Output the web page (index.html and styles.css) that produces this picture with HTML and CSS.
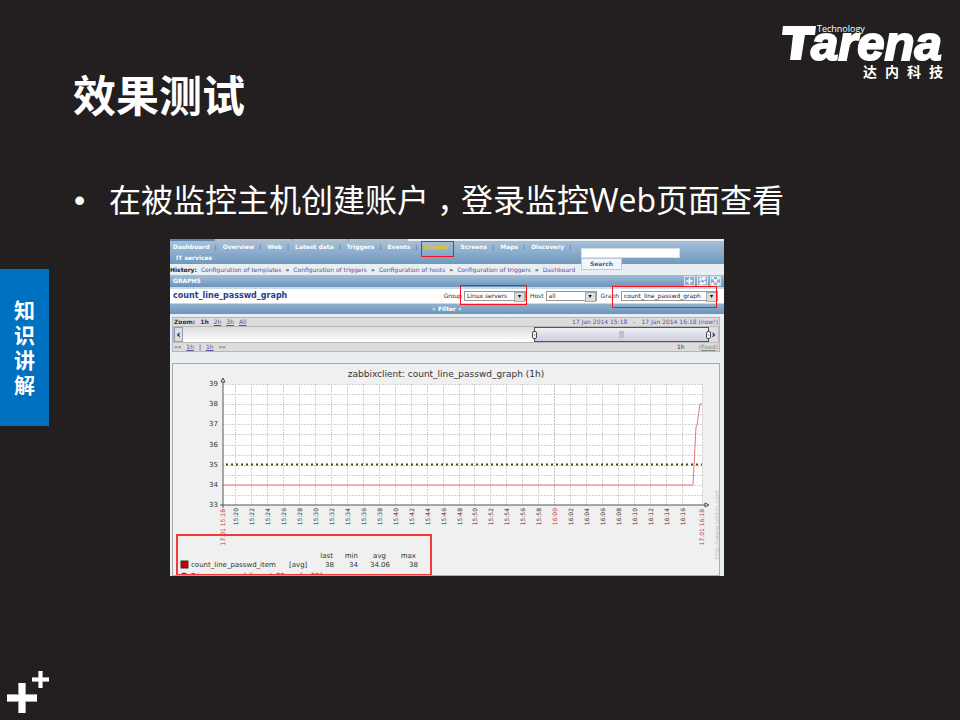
FILE: index.html
```html
<!DOCTYPE html>
<html lang="zh-CN">
<head>
<meta charset="utf-8">
<title>效果测试</title>
<link rel="stylesheet" href="styles.css">
</head>
<body>
<aside class="rail">
  <div class="section-tab"><span>知</span><span>识</span><span>讲</span><span>解</span></div>
  <svg class="pluses" viewBox="0 0 42 42" aria-hidden="true">
    <path class="plus-edge" d="M11 12h8v30h-8zM0 23h30v8H0zM31 0h5v17h-5zM25 6h17v5H25z"/>
    <path class="plus-fill" d="M12 12h6v30h-6zM0 24h30v6H0zM32 0h3v17h-3zM25 7h17v3H25z"/>
  </svg>
</aside>
<main class="slide">
  <header class="slide-head">
    <h1>效果测试</h1>
    <svg class="logo" viewBox="0 0 164 60" role="img" aria-label="Tarena Technology 达内科技">
      <path d="M1 2H34L33 11H23L19 36H8L11 11H0Z"/>
      <text class="logo-name" x="29" y="36">arena</text>
      <text class="logo-sub" x="35" y="8">Technology</text>
      <g class="logo-cn"><text x="81" y="53">达</text><text x="103" y="53">内</text><text x="125" y="53">科</text><text x="147" y="53">技</text></g>
    </svg>
  </header>
  <ul class="points"><li><span>在被监控主机创建账户<span class="comma" lang="zh-TW">，</span>登录监控Web页面查看</span></li></ul>

  <section class="shot">
    <div class="strip"><i></i><i></i><i></i><i></i></div>
    <div class="topbar">
      <nav class="menu">
        <a href="#">Dashboard</a><a href="#">Overview</a><a href="#">Web</a><a href="#">Latest data</a><a href="#">Triggers</a><a href="#">Events</a><a href="#" class="current">Graphs</a><a href="#">Screens</a><a href="#">Maps</a><a href="#">Discovery</a>
      </nav>
      <a href="#" class="submenu">IT services</a>
      <form class="search">
        <input type="text" aria-label="Search">
        <button type="button">Search</button>
      </form>
    </div>
    <div class="history"><b>History:</b><a href="#">Configuration of templates</a><b>»</b><a href="#">Configuration of triggers</a><b>»</b><a href="#">Configuration of hosts</a><b>»</b><a href="#">Configuration of triggers</a><b>»</b><a href="#">Dashboard</a></div>
    <div class="bar">
      <span>GRAPHS</span>
      <span class="tools">
        <button type="button" aria-label="Add"><svg viewBox="0 0 10 10"><path d="M5 1v8M1 5h8"/></svg></button>
        <button type="button" aria-label="Refresh"><svg viewBox="0 0 10 10"><path d="M2 5V2h6M8 5v3H2M6 0l2 2-2 2M4 6L2 8l2 2"/></svg></button>
        <button type="button" aria-label="Fullscreen"><svg viewBox="0 0 10 10"><path d="M1 3V1h2M7 1h2v2M9 7v2H7M3 9H1V7M3 3l4 4M7 3L3 7"/></svg></button>
      </span>
    </div>
    <div class="picker">
      <h2>count_line_passwd_graph</h2>
      <label for="group">Group</label>
      <span class="drop drop-group marked"><select id="group"><option>Linux servers</option></select></span>
      <label for="host">Host</label>
      <span class="drop drop-host"><select id="host"><option>all</option></select></span>
      <label for="graph">Graph</label>
      <span class="drop drop-graph marked"><select id="graph"><option>count_line_passwd_graph</option></select></span>
    </div>
    <div class="filter"><i>«</i> Filter <i>«</i></div>

    <div class="timeline">
      <div class="time-row">
        <b>Zoom:</b><b class="chosen">1h</b><a href="#">2h</a><a href="#">3h</a><a href="#">All</a>
        <span class="range"><span>17 Jan 2014 15:18</span><span>-</span><span>17 Jan 2014 16:18 (now!)</span></span>
      </div>
      <div class="track">
        <button type="button" aria-label="Back">‹</button>
        <div class="thumb"><span class="grip">‹</span><span class="middle"></span><span class="grip">›</span></div>
        <button type="button" aria-label="Forward">›</button>
      </div>
      <div class="time-row">
        <span>««</span><a href="#">1h</a><span>|</span><a href="#">1h</a><span>»»</span>
        <span class="length">1h</span><span class="fixed">(<a href="#">fixed</a>)</span>
      </div>
    </div>

    <div class="chart">
      <svg id="plot" viewBox="172 363 548 213" role="img" aria-label="count_line_passwd_graph">
        <rect class="plot-area" x="223" y="384" width="479" height="121"/>
        <g id="grid"></g>
        <text class="chart-title" x="446" y="377">zabbixclient: count_line_passwd_graph (1h)</text>
        <path class="trigger" d="M226 464.500H702"/>
        <path class="series" d="M223 485H693L696 427L697 425L700 404H702"/>
        <path class="axis" d="M223 508V379M220 505H706"/>
        <path class="arrow" d="M221 382L223 378L225 382ZM705 503L709 505L705 507Z"/>
        <g id="labels"></g>
        <text class="credit" transform="translate(719 559) rotate(-90)">http://www.zabbix.com</text>
        <g class="legend">
          <rect class="swatch" x="181" y="561" width="7" height="7"/>
          <text x="191" y="567">count_line_passwd_item</text><text x="289" y="567">[avg]</text>
          <g class="num">
            <text x="333" y="558">last</text><text x="358" y="558">min</text><text x="386" y="558">avg</text><text x="416" y="558">max</text>
            <text x="334" y="567">38</text><text x="358" y="567">34</text><text x="390" y="567">34.06</text><text x="418" y="567">38</text>
          </g>
          <circle class="dot" cx="184" cy="576" r="3"/>
          <text x="191" y="578">Trigger: passwd_line_gt_35</text><text x="300" y="578">[&gt; 35]</text>
        </g>
        <rect class="mark" x="177" y="535" width="254" height="40"/>
      </svg>
    </div>
  </section>
</main>
<script src="chart.js"></script>
</body>
</html>
```
FILE: styles.css
```css
* { box-sizing: border-box; }
body {
  margin: 0;
  min-height: 100vh;
  display: grid;
  grid-template-columns: 49px 1fr;
  background: #231f20;
  color: #fff;
  font-family: "Open Sans", "Noto Sans CJK SC", sans-serif;
}
a { color: inherit; text-decoration: none; }
button, input, select { font: inherit; margin: 0; padding: 0; border-radius: 0; }

.rail { display: flex; flex-direction: column; padding: 269px 0 7px; }
.section-tab {
  display: flex;
  flex-direction: column;
  align-items: center;
  min-height: 157px;
  padding: 28px 0 27px;
  background: #0070c0;
  font: bold 21px/25px "Noto Sans CJK SC", sans-serif;
}
.section-tab span { height: 25px; }
.pluses { width: 42px; margin: auto 0 0 7px; }
.plus-edge { fill: #aaa8a8; }
.plus-fill { fill: #fff; }

.slide { min-width: 0; }
.slide-head {
  display: flex;
  justify-content: space-between;
  align-items: flex-start;
  padding: 24px 14px 0 24px;
  height: 150px;
}
h1 { margin: 39px 0 0; font: bold 43px/60px "Noto Sans CJK SC", sans-serif; }
.logo { width: 164px; fill: #fff; overflow: visible; }
.logo-name { font: italic bold 49px "Liberation Sans", sans-serif; stroke: #fff; stroke-width: 2px; }
.logo-sub { font: 9px "Open Sans", sans-serif; }
.logo-cn { font: bold 14px "Noto Sans CJK SC", sans-serif; }
.points { list-style: none; margin: 26px 25px 0; padding: 0; font-size: 32px; line-height: 48px; height: 63px; }
.points li { display: flex; }
.points li::before { content: "•"; width: 35px; font-family: "Liberation Sans", sans-serif; }
.comma { display: inline-block; width: 32px; line-height: 32px; text-indent: 8px; white-space: nowrap; }

.shot {
  margin: 0 236px 0 121px;
  background: #e9eef2;
  color: #333;
  font: 6px/10px "DejaVu Sans", sans-serif;
  overflow: hidden;
}
.strip { display: grid; grid-template-columns: 45fr 78fr 55fr 60fr; height: 2px; column-gap: 1px; background: #8796a3; border-right: 316px solid #e9eef2; }
.strip i { background: #b5bec6; }
.strip i:first-child { background: #5f87ab; }

.topbar { position: relative; height: 23px; padding: 1px 3px 0; background: linear-gradient(#a6bfd7, #7099bf); color: #fff; font-weight: bold; }
.menu { display: flex; }
.menu a::after { content: "|"; color: #52678d; font-weight: normal; margin: 0 6px 0 5px; }
.menu .current { color: #e8c510; position: relative; }
.current::before { content: ""; position: absolute; inset: -1px 6px -5px -2px; border: 1px solid #ff1018; }
.submenu { display: block; margin-left: 3px; line-height: 12px; }
.search { position: absolute; top: 7px; left: 411px; z-index: 1; display: grid; justify-items: start; }
.search input { width: 99px; height: 10px; border: 1px solid #d5dfe8; background: #fff; }
.search button { width: 41px; height: 12px; border: 1px solid #b8c9d9; background: #f2f6fa; color: #3e6a96; font-weight: bold; line-height: 10px; }

.history { display: flex; gap: 4px; height: 11px; line-height: 11px; color: #333; white-space: nowrap; }
.history a { color: #5b4fa0; }
.history b { color: #222; }

.bar { display: flex; justify-content: space-between; height: 12px; padding: 0 3px; line-height: 12px; background: linear-gradient(#a4bed6, #6b95bc); color: #fff; font-weight: bold; }
.tools { display: flex; gap: 2px; padding-top: 1px; }
.tools button { width: 11px; height: 10px; border: 1px solid #d5e2ee; background: #8cadcb; display: flex; }
.tools svg { width: 100%; fill: none; stroke: #fff; stroke-width: 2; }

.picker { display: flex; align-items: center; height: 17px; padding: 0 6px 0 3px; border: solid #c8d9e7; border-width: 2px 0 1px; background: #fff; }
h2 { margin: 0 auto 0 0; font: bold 8px/12px "DejaVu Sans", sans-serif; color: #27408b; }
.picker label { margin: 0 2px 0 4px; }
.drop { position: relative; height: 10px; border: 1px solid #999; background: #fff; display: flex; }
.drop select { appearance: none; width: 100%; border: 0; background: none; padding-left: 2px; color: #222; line-height: 8px; }
.drop::after { content: "▾"; position: absolute; right: 0; top: 0; width: 9px; height: 8px; background: #ddd; border: 1px solid #aaa; color: #000; text-align: center; line-height: 6px; pointer-events: none; }
.drop-group { width: 62px; }
.drop-host { width: 51px; }
.drop-graph { width: 97px; }
.marked::before { content: ""; position: absolute; inset: -7px -2px -5px -5px; border: 1px solid #ff1018; z-index: 1; pointer-events: none; }
.drop-graph::before { inset: -6px 0 -8px -10px; }
.filter { height: 10px; background: linear-gradient(#91b1ce, #6b95bc); color: #fff; font-weight: bold; text-align: center; }
.filter i { display: inline-block; transform: rotate(90deg); font-weight: normal; }

.timeline { margin: 3px 4px 0 2px; border: 1px solid #a8b8cf; background: #dcdcdc; }
.time-row { display: flex; gap: 5px; height: 8px; padding: 0 1px; line-height: 8px; }
.time-row a { color: #5b4fa0; text-decoration: underline; }
.time-row .chosen { color: #30249a; }
.range { display: flex; gap: 6px; margin-left: auto; color: #5b4fa0; }
.length { margin-left: auto; margin-right: 9px; }
.fixed, .time-row .fixed a { color: #888; }
.track { display: flex; height: 17px; border: 1px solid #bbb; background: linear-gradient(#dcdcdc, #fff); }
.track > button { width: 9px; border: 1px solid #9a9aaa; background: #dcdce8; color: #000; font-weight: bold; font-size: 10px; line-height: 10px; }
.track > button:last-child { border: 0; }
.thumb { margin-left: auto; width: 175px; border: 1px solid #555; background: linear-gradient(#f0f0f6, #cdcddf); display: flex; justify-content: space-between; align-items: center; }
.grip { position: relative; width: 5px; height: 8px; margin: 0 -3px; border: 1px solid #444; border-radius: 2px; background: #fff; line-height: 5px; text-align: center; }
.middle { width: 5px; height: 7px; background: #bcc2d0; }

.chart { margin: 11px 4px 0 2px; background: #f0f0f0; outline: 1px solid #aaa; outline-offset: -1px; }
.chart svg { display: block; width: 100%; }
.plot-area { fill: #fff; }
.grid-line { stroke: #d2d2d2; stroke-dasharray: 2 1; fill: none; stroke-width: 1; }
.grid-hour { stroke: #c0c0c0; }
.trigger { stroke: #554511; stroke-width: 2; stroke-dasharray: 2 3; }
.series { fill: none; stroke: #e87474; stroke-width: 1; }
.axis { fill: none; stroke: #555; }
.arrow { fill: #fff; stroke: #444; }
.chart text { fill: #333; font: 7px "DejaVu Sans", sans-serif; }
.chart .chart-title { font-size: 9px; text-anchor: middle; }
.chart .y-label { text-anchor: end; }
.chart .x-label { font-size: 6px; text-anchor: end; }
.chart .red { fill: #b93a3a; }
.chart .credit { fill: #bbb; font-size: 6px; }
.chart .num text { text-anchor: end; }
.swatch { fill: #c80000; stroke: #333; }
.dot { fill: #e9c34a; stroke: #333; }
.mark { fill: none; stroke: #f23838; stroke-width: 2; }
```
FILE: chart.js
```javascript
const NS = "http://www.w3.org/2000/svg";
const grid = document.getElementById("grid");
const labels = document.getElementById("labels");

function line(d, hour) {
  const p = document.createElementNS(NS, "path");
  p.setAttribute("d", d);
  p.setAttribute("class", hour ? "grid-line grid-hour" : "grid-line");
  grid.append(p);
}
function label(text, cls, x, y, turned) {
  const t = document.createElementNS(NS, "text");
  t.setAttribute("class", cls);
  t.setAttribute("transform", `translate(${x} ${y})` + (turned ? " rotate(-90)" : ""));
  t.textContent = text;
  labels.append(t);
}

for (let i = 0; i < 12; i++) line(`M223 ${Math.round(384 + i * 121 / 12) + 0.5}H702`);
for (let v = 33; v <= 39; v++) label(v, "y-label", 218, Math.round(507 - (v - 33) * 121 / 6));
for (let m = 20; m <= 76; m += 2) {
  const x = Math.round(235 + (m - 20) * 447 / 56);
  const hour = m === 60;
  line(`M${x + 0.5} 384V505`, hour);
  const text = `${15 + Math.floor(m / 60)}:${String(m % 60).padStart(2, "0")}`;
  label(text, hour ? "x-label red" : "x-label", x + 3, 508, true);
}
line("M702.5 384V505");
label("17.01 15:18", "x-label red", 225, 509, true);
label("17.01 16:18", "x-label red", 704, 509, true);
```
